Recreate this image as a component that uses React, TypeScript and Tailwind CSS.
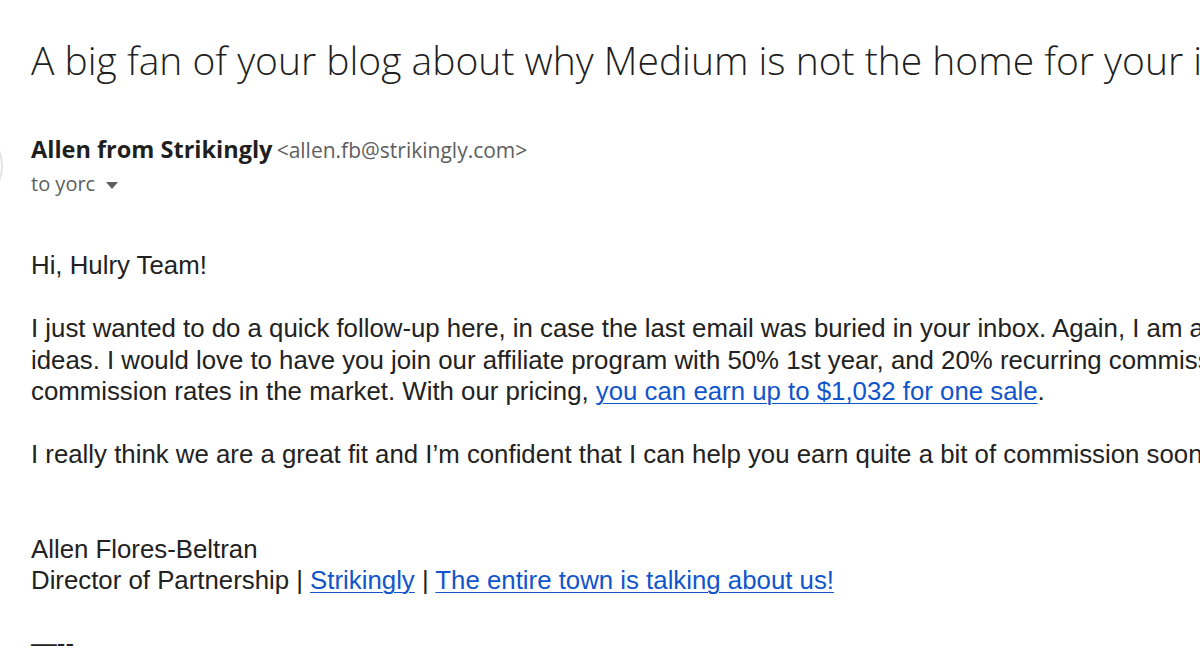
import React from 'react';

const LINK = 'text-[#1155cc] underline underline-offset-[3px] decoration-1';

function Line({ children }: { children?: React.ReactNode }) {
  return <div className="h-[31.5px] whitespace-nowrap">{children}</div>;
}

export default function App() {
  return (
    <main className="w-[1200px] h-[671px] overflow-hidden bg-white">

      {/* Subject */}
      <h1
        className="pl-[31px] pt-[36px] whitespace-nowrap text-[39px] leading-[48px] font-light text-[#1f1f1f]"
        style={{ fontFamily: '"Open Sans", Roboto, sans-serif' }}
      >
        A big fan of your blog about why Medium is not the home for your ideas
      </h1>

      {/* Sender */}
      <div className="flex items-start mt-[50px]">
        <div className="w-[80px] h-[80px] rounded-full border-2 border-[#e3e3e3] shrink-0 ml-[-77px] mt-[-8px]" />
        <div className="ml-[28px]" style={{ fontFamily: '"Open Sans", Roboto, sans-serif' }}>
          <div className="whitespace-nowrap leading-[30px]">
            <span className="text-[23.5px] font-bold text-[#1f1f1f]">Allen from Strikingly</span>{' '}
            <span className="text-[21px] text-[#5e5e5e]">&lt;allen.fb@strikingly.com&gt;</span>
          </div>
          <div className="flex items-center gap-[11px] mt-[4px] text-[20px] leading-[26px] text-[#5e5e5e]">
            <span>to yorc</span>
            <svg width="12" height="7" viewBox="0 0 12 7" className="mt-[2px]">
              <path d="M0 0h12L6 7z" fill="#5e5e5e" />
            </svg>
          </div>
        </div>
      </div>

      {/* Body */}
      <div
        className="pl-[31px] pt-[44px] text-[25.8px] leading-[31.5px] text-[#222222]"
        style={{ fontFamily: '"Liberation Sans", Arial, sans-serif' }}
      >
        <Line>Hi, Hulry Team!</Line>
        <Line />
        <Line>I just wanted to do a quick follow-up here, in case the last email was buried in your inbox. Again, I am a big fan of your blog and your</Line>
        <Line>ideas. I would love to have you join our affiliate program with 50% 1st year, and 20% recurring commission, which are one of the highest</Line>
        <Line>
          commission rates in the market. With our pricing, <a className={LINK}>you can earn up to $1,032 for one sale</a>.
        </Line>
        <Line />
        <Line>I really think we are a great fit and I’m confident that I can help you earn quite a bit of commission soon.</Line>
        <Line />
        <Line />
        <Line>Allen Flores-Beltran</Line>
        <Line>
          Director of Partnership | <a className={LINK}>Strikingly</a> | <a className={LINK}>The entire town is talking about us!</a>
        </Line>
        <Line />
        <Line>—--</Line>
      </div>
    </main>
  );
}
